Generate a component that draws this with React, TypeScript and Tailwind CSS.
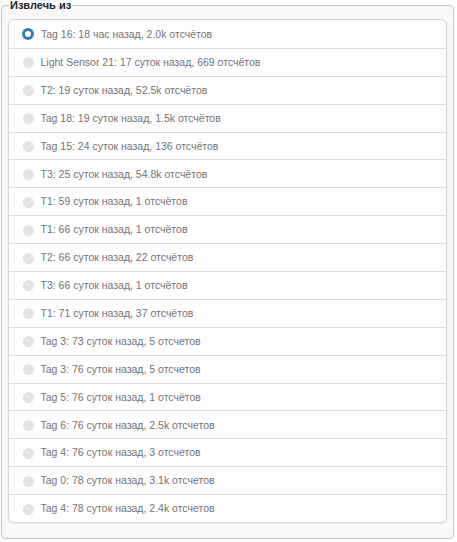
import React, { useState } from 'react';

// Source picker — list of tags with last report time and count

const sources = [
  'Tag 16: 18 час назад, 2.0k отсчётов',
  'Light Sensor 21: 17 суток назад, 669 отсчётов',
  'T2: 19 суток назад, 52.5k отсчётов',
  'Tag 18: 19 суток назад, 1.5k отсчётов',
  'Tag 15: 24 суток назад, 136 отсчётов',
  'T3: 25 суток назад, 54.8k отсчётов',
  'T1: 59 суток назад, 1 отсчётов',
  'T1: 66 суток назад, 1 отсчётов',
  'T2: 66 суток назад, 22 отсчётов',
  'T3: 66 суток назад, 1 отсчётов',
  'T1: 71 суток назад, 37 отсчётов',
  'Tag 3: 73 суток назад, 5 отсчетов',
  'Tag 3: 76 суток назад, 5 отсчетов',
  'Tag 5: 76 суток назад, 1 отсчётов',
  'Tag 6: 76 суток назад, 2.5k отсчетов',
  'Tag 4: 76 суток назад, 3 отсчетов',
  'Tag 0: 78 суток назад, 3.1k отсчетов',
  'Tag 4: 78 суток назад, 2.4k отсчетов',
];

export default function App() {
  const [selected, setSelected] = useState(0);

  return (
    <div
      className="w-[457px] h-[542px] bg-white"
      style={{ fontFamily: '"Liberation Sans", Arial, sans-serif' }}
    >
      <fieldset className="ml-[1px] w-[453px] h-[539px] border border-[#c8c8c8] rounded-[4px] bg-[#f8f8f8] px-[6px] pt-[8px]">
        <legend className="ml-[1px] px-[1px] text-[11px] leading-[11px] font-bold text-[#222]">
          Извлечь из
        </legend>

        <div className="bg-white border border-[#d6d6d6] rounded-[6px] shadow-[0_1px_2px_rgba(0,0,0,0.08)]">
          {sources.map((label, i) => (
            <button
              key={i}
              type="button"
              onClick={() => setSelected(i)}
              className={`flex items-center w-full h-[27.9px] pl-[13px] pt-[1px] text-left ${
                i > 0 ? 'border-t border-[#dedede]' : ''
              }`}
            >
              {selected === i ? (
                <span className="w-[12px] h-[12px] rounded-full border-[3px] border-[#2f7db8] bg-white shrink-0" />
              ) : (
                <span className="w-[11px] h-[11px] rounded-full bg-[#e3e3e3] shrink-0 ml-[0.5px]" />
              )}
              <span className="ml-[7px] text-[10.5px] text-[#737373] whitespace-nowrap">{label}</span>
            </button>
          ))}
        </div>
      </fieldset>
    </div>
  );
}
